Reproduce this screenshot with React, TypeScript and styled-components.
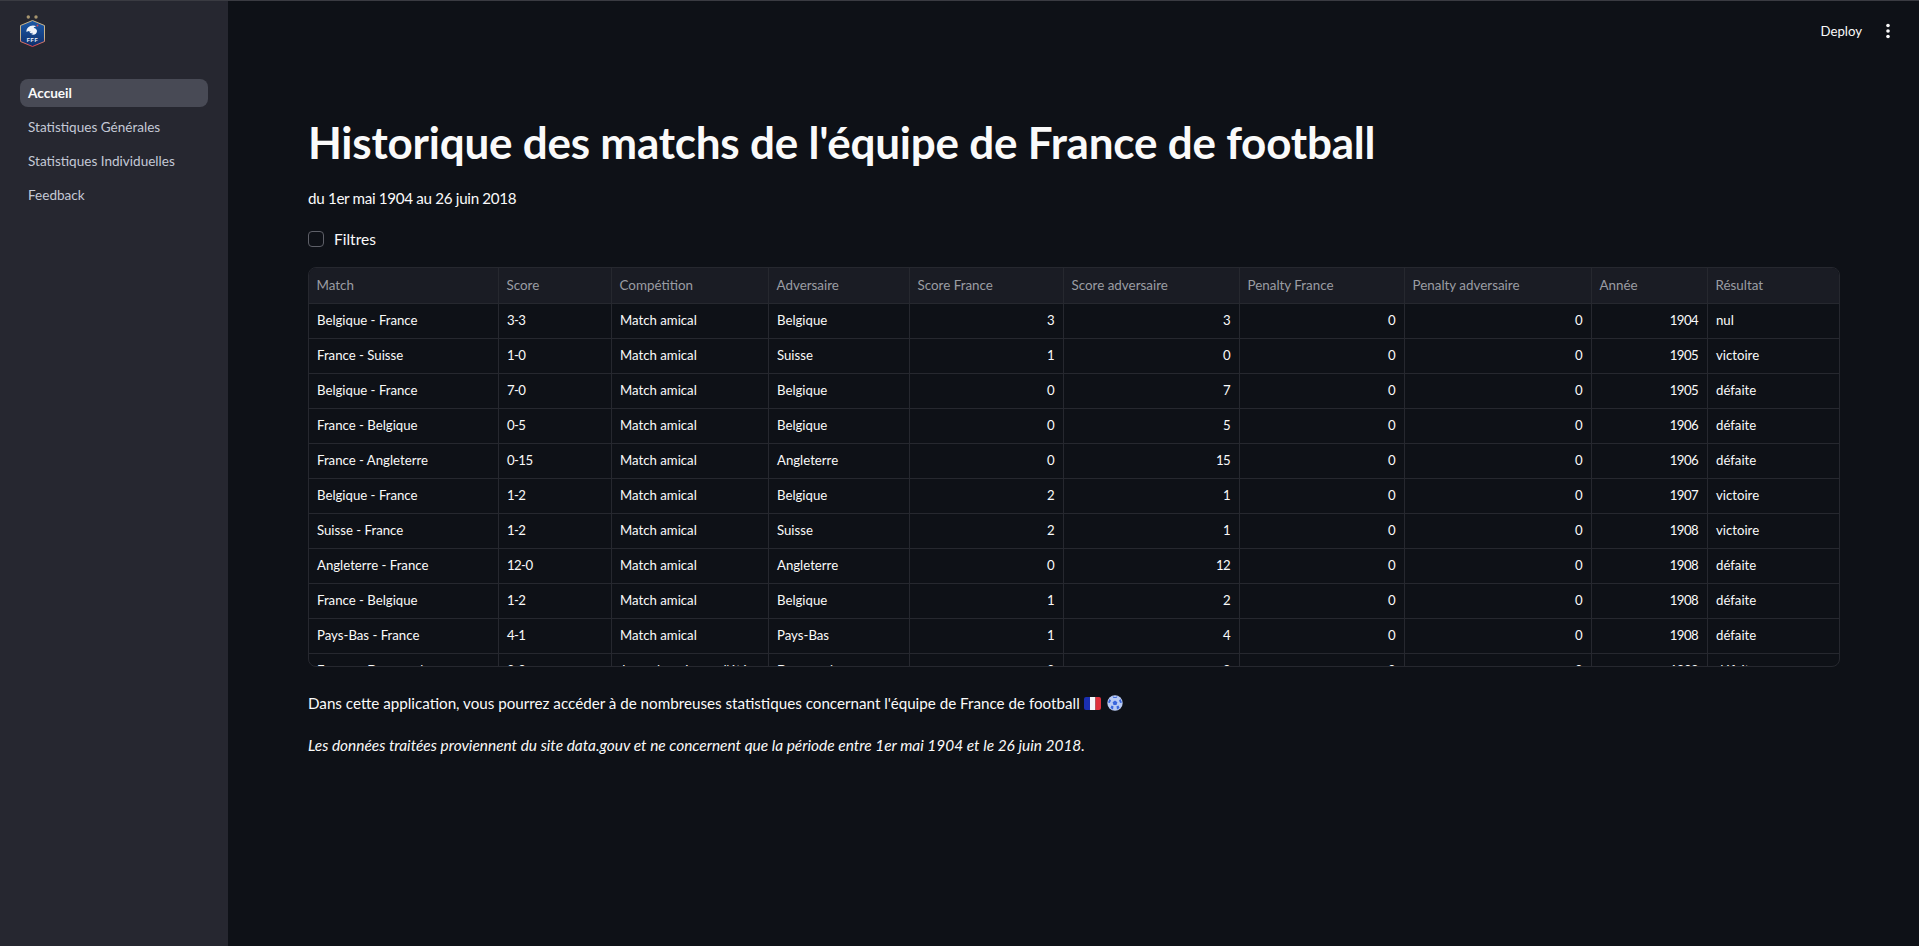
import React from "react";
import styled, { createGlobalStyle } from "styled-components";

const FONT = `"Lato", "Noto Sans", sans-serif`;

const Global = createGlobalStyle`
  html, body { margin: 0; padding: 0; height: 100%; background: #0e1117; }
  #root { height: 100%; }
  * { box-sizing: border-box; }
`;

const Shell = styled.div`
  display: flex;
  height: 946px;
  overflow: hidden;
  background: #0e1117;
  color: #fafafa;
  font-family: ${FONT};
  border-top: 1px solid #3a3b42;
`;

const Sidebar = styled.aside`
  flex: 0 0 228px;
  background: #262730;
  padding: 13px 20px 0;
`;

const LogoBox = styled.div`
  height: 65px;
  margin-left: -1px;
`;

const NavList = styled.nav`
  display: flex;
  flex-direction: column;
  gap: 6px;
`;

const NavItem = styled.a<{ $active?: boolean }>`
  display: flex;
  align-items: center;
  height: 28px;
  padding: 0 8px;
  border-radius: 8px;
  font-size: 13.55px;
  font-weight: ${(p) => (p.$active ? 700 : 400)};
  color: ${(p) => (p.$active ? "#fafafa" : "#c4c9d6")};
  background: ${(p) => (p.$active ? "#484a55" : "transparent")};
`;

const Main = styled.main`
  flex: 1;
  min-width: 0;
  display: flex;
  flex-direction: column;
`;

const TopBar = styled.header`
  display: flex;
  justify-content: flex-end;
  align-items: center;
  height: 60px;
  padding: 0 24px 0 0;
  gap: 19px;
`;

const Deploy = styled.span`
  font-size: 13.2px;
  color: #fafafa;
`;

const Content = styled.div`
  padding: 51px 79px 0 80px;
`;

const Title = styled.h1`
  margin: 0;
  font-size: 44px;
  line-height: 60px;
  font-weight: 700;
  letter-spacing: -0.22px;
  color: #fafafa;
`;

const Subtitle = styled.p`
  margin: 14px 0 0;
  font-size: 15.2px;
  line-height: 24px;
  letter-spacing: -0.32px;
`;

const FilterRow = styled.label`
  display: flex;
  align-items: center;
  gap: 10px;
  margin-top: 17px;
  height: 24px;
  font-size: 15.5px;
`;

const Check = styled.span`
  width: 16px;
  height: 16px;
  border: 1px solid #5e6068;
  border-radius: 4px;
  background: #0e1117;
`;

const TableWrap = styled.div`
  margin-top: 16px;
  width: 1532px;
  height: 400px;
  border: 1px solid #26282f;
  border-radius: 8px;
  overflow: hidden;
`;

const Table = styled.div`
  display: grid;
  grid-template-columns: 190px 113px 157px 141px 154px 176px 165px 187px 116px 131px;
`;

const Cell = styled.div<{ $head?: boolean; $num?: boolean; $tight?: boolean; $last?: boolean }>`
  height: ${(p) => (p.$head ? 36 : 35)}px;
  display: flex;
  align-items: center;
  justify-content: ${(p) => (p.$num ? "flex-end" : "flex-start")};
  padding: 0 ${(p) => (p.$num ? 9 : 8)}px 2px ${(p) => (p.$head ? 7.5 : 8)}px;
  font-size: ${(p) => (p.$head ? 13.4 : 13.2)}px;
  letter-spacing: ${(p) => (p.$tight ? "-0.6px" : "0")};
  white-space: nowrap;
  overflow: hidden;
  color: ${(p) => (p.$head ? "#9a9ca3" : "#fafafa")};
  background: ${(p) => (p.$head ? "#1a1c24" : "transparent")};
  border-bottom: 1px solid #26282f;
  border-right: ${(p) => (p.$last ? "none" : "1px solid #26282f")};
`;

const Para = styled.p`
  display: flex;
  align-items: center;
  margin: 24px 0 0;
  font-size: 15.2px;
  line-height: 24px;
`;

const Italic = styled.p`
  margin: 18px 0 0;
  font-size: 15.45px;
  line-height: 24px;
  font-style: italic;
`;

const FlagIcon = styled.svg`
  margin-left: 4px;
  flex: none;
`;

const BallIcon = styled.svg`
  margin-left: 6px;
  flex: none;
`;

const heads = ["Match", "Score", "Compétition", "Adversaire", "Score France", "Score adversaire", "Penalty France", "Penalty adversaire", "Année", "Résultat"];
const numeric = [false, false, false, false, true, true, true, true, true, false];

const rows: (string | number)[][] = [
  ["Belgique - France", "3-3", "Match amical", "Belgique", 3, 3, 0, 0, 1904, "nul"],
  ["France - Suisse", "1-0", "Match amical", "Suisse", 1, 0, 0, 0, 1905, "victoire"],
  ["Belgique - France", "7-0", "Match amical", "Belgique", 0, 7, 0, 0, 1905, "défaite"],
  ["France - Belgique", "0-5", "Match amical", "Belgique", 0, 5, 0, 0, 1906, "défaite"],
  ["France - Angleterre", "0-15", "Match amical", "Angleterre", 0, 15, 0, 0, 1906, "défaite"],
  ["Belgique - France", "1-2", "Match amical", "Belgique", 2, 1, 0, 0, 1907, "victoire"],
  ["Suisse - France", "1-2", "Match amical", "Suisse", 2, 1, 0, 0, 1908, "victoire"],
  ["Angleterre - France", "12-0", "Match amical", "Angleterre", 0, 12, 0, 0, 1908, "défaite"],
  ["France - Belgique", "1-2", "Match amical", "Belgique", 1, 2, 0, 0, 1908, "défaite"],
  ["Pays-Bas - France", "4-1", "Match amical", "Pays-Bas", 1, 4, 0, 0, 1908, "défaite"],
  ["France - Danemark", "0-9", "Jeux olympiques d'été", "Danemark", 0, 9, 0, 0, 1908, "défaite"],
];

const Logo = () => (
  <svg width="28" height="34" viewBox="0 0 28 34">
    <defs>
      <linearGradient id="shield" x1="0" y1="0" x2="0" y2="1">
        <stop offset="0" stopColor="#1d5aa8" />
        <stop offset="1" stopColor="#0f2f6b" />
      </linearGradient>
      <linearGradient id="edge" x1="0" y1="0" x2="0" y2="1">
        <stop offset="0" stopColor="#c9b48a" />
        <stop offset="0.65" stopColor="#c9b48a" />
        <stop offset="1" stopColor="#e0444e" />
      </linearGradient>
    </defs>
    <circle cx="9.300" cy="3" r="1.700" fill="#a8966f" />
    <circle cx="17" cy="3" r="1.700" fill="#a8966f" />
    <path d="M13.500 6.500L25.500 11.500V27.500L13.500 32.500L1.500 27.500V11.500Z" fill="url(#shield)" stroke="url(#edge)" strokeWidth="1" strokeLinejoin="round" />
    <path d="M7.500 18c-.5-3.500 2.500-6.500 6.500-6.500 1.300 0 2.500.3 3.500 1-1.500 0-2.500.6-2.800 1.400 1.800.2 3.300 1.300 3.300 3.100 0 2.300-1.800 3.800-3.700 3.800-.9 0-1.600-.3-2.100-.8 1 0 1.700-.5 1.800-1.200-1.300.7-2.900.3-3.400-.6.700 0 1.200-.2 1.300-.6-1.200.2-2-.2-2.400-.6z" fill="#f1f4fa" />
    <circle cx="18.500" cy="11.500" r="0.900" fill="#e0444e" />
    <text x="13.500" y="27.800" textAnchor="middle" fontFamily="Liberation Sans, sans-serif" fontWeight="700" fontSize="5.200" letterSpacing="0.7" fill="#f1f4fa">FFF</text>
  </svg>
);

const Kebab = () => (
  <svg width="14" height="16" viewBox="0 0 14 16">
    <circle cx="7" cy="2.500" r="1.800" fill="#fafafa" />
    <circle cx="7" cy="8" r="1.800" fill="#fafafa" />
    <circle cx="7" cy="13.500" r="1.800" fill="#fafafa" />
  </svg>
);

const Flag = () => (
  <FlagIcon width="17" height="13" viewBox="0 0 17 13">
    <defs>
      <clipPath id="flagClip"><rect width="17" height="13" rx="2" /></clipPath>
    </defs>
    <g clipPath="url(#flagClip)">
      <rect width="6" height="13" fill="#1a2fb0" />
      <rect x="6" width="5.500" height="13" fill="#f4f6fa" />
      <rect x="11.500" width="5.500" height="13" fill="#e0303c" />
    </g>
  </FlagIcon>
);

const Ball = () => (
  <BallIcon width="16" height="16" viewBox="0 0 16 16">
    <circle cx="8" cy="8" r="7.700" fill="#b9cbf3" />
    <path d="M8 5.500l2.400 1.700-.9 2.800h-3l-.9-2.800z" fill="#3a66dc" />
    <path d="M5.500 1.200L8 2.200l2.500-1-1 1.800H6.500zM13.500 4l1.500 3.500-1.800.4-1.200-2.400zM2.500 4L1 7.500l1.800.4 1.200-2.400zM3.500 13l1-2.500 2 .8L6 14.500zM12.500 13l-1-2.500-2 .8.500 3.200z" fill="#3a66dc" />
  </BallIcon>
);

export default function App() {
  return (
    <>
      <Global />
      <Shell>
        <Sidebar>
          <LogoBox><Logo /></LogoBox>
          <NavList>
            <NavItem $active>Accueil</NavItem>
            <NavItem>Statistiques Générales</NavItem>
            <NavItem>Statistiques Individuelles</NavItem>
            <NavItem>Feedback</NavItem>
          </NavList>
        </Sidebar>
        <Main>
          <TopBar>
            <Deploy>Deploy</Deploy>
            <Kebab />
          </TopBar>
          <Content>
            <Title>Historique des matchs de l'équipe de France de football</Title>
            <Subtitle>du 1er mai 1904 au 26 juin 2018</Subtitle>
            <FilterRow><Check />Filtres</FilterRow>
            <TableWrap>
              <Table>
                {heads.map((h, i) => (
                  <Cell key={h} $head $last={i === heads.length - 1}>{h}</Cell>
                ))}
                {rows.flatMap((r, ri) =>
                  r.map((v, ci) => (
                    <Cell
                      key={`${ri}-${ci}`}
                      $num={numeric[ci]}
                      $tight={numeric[ci] || ci === 1}
                      $last={ci === r.length - 1}
                    >
                      {v}
                    </Cell>
                  ))
                )}
              </Table>
            </TableWrap>
            <Para>
              Dans cette application, vous pourrez accéder à de nombreuses statistiques concernant l'équipe de France de football
              <Flag />
              <Ball />
            </Para>
            <Italic>Les données traitées proviennent du site data.gouv et ne concernent que la période entre 1er mai 1904 et le 26 juin 2018.</Italic>
          </Content>
        </Main>
      </Shell>
    </>
  );
}
